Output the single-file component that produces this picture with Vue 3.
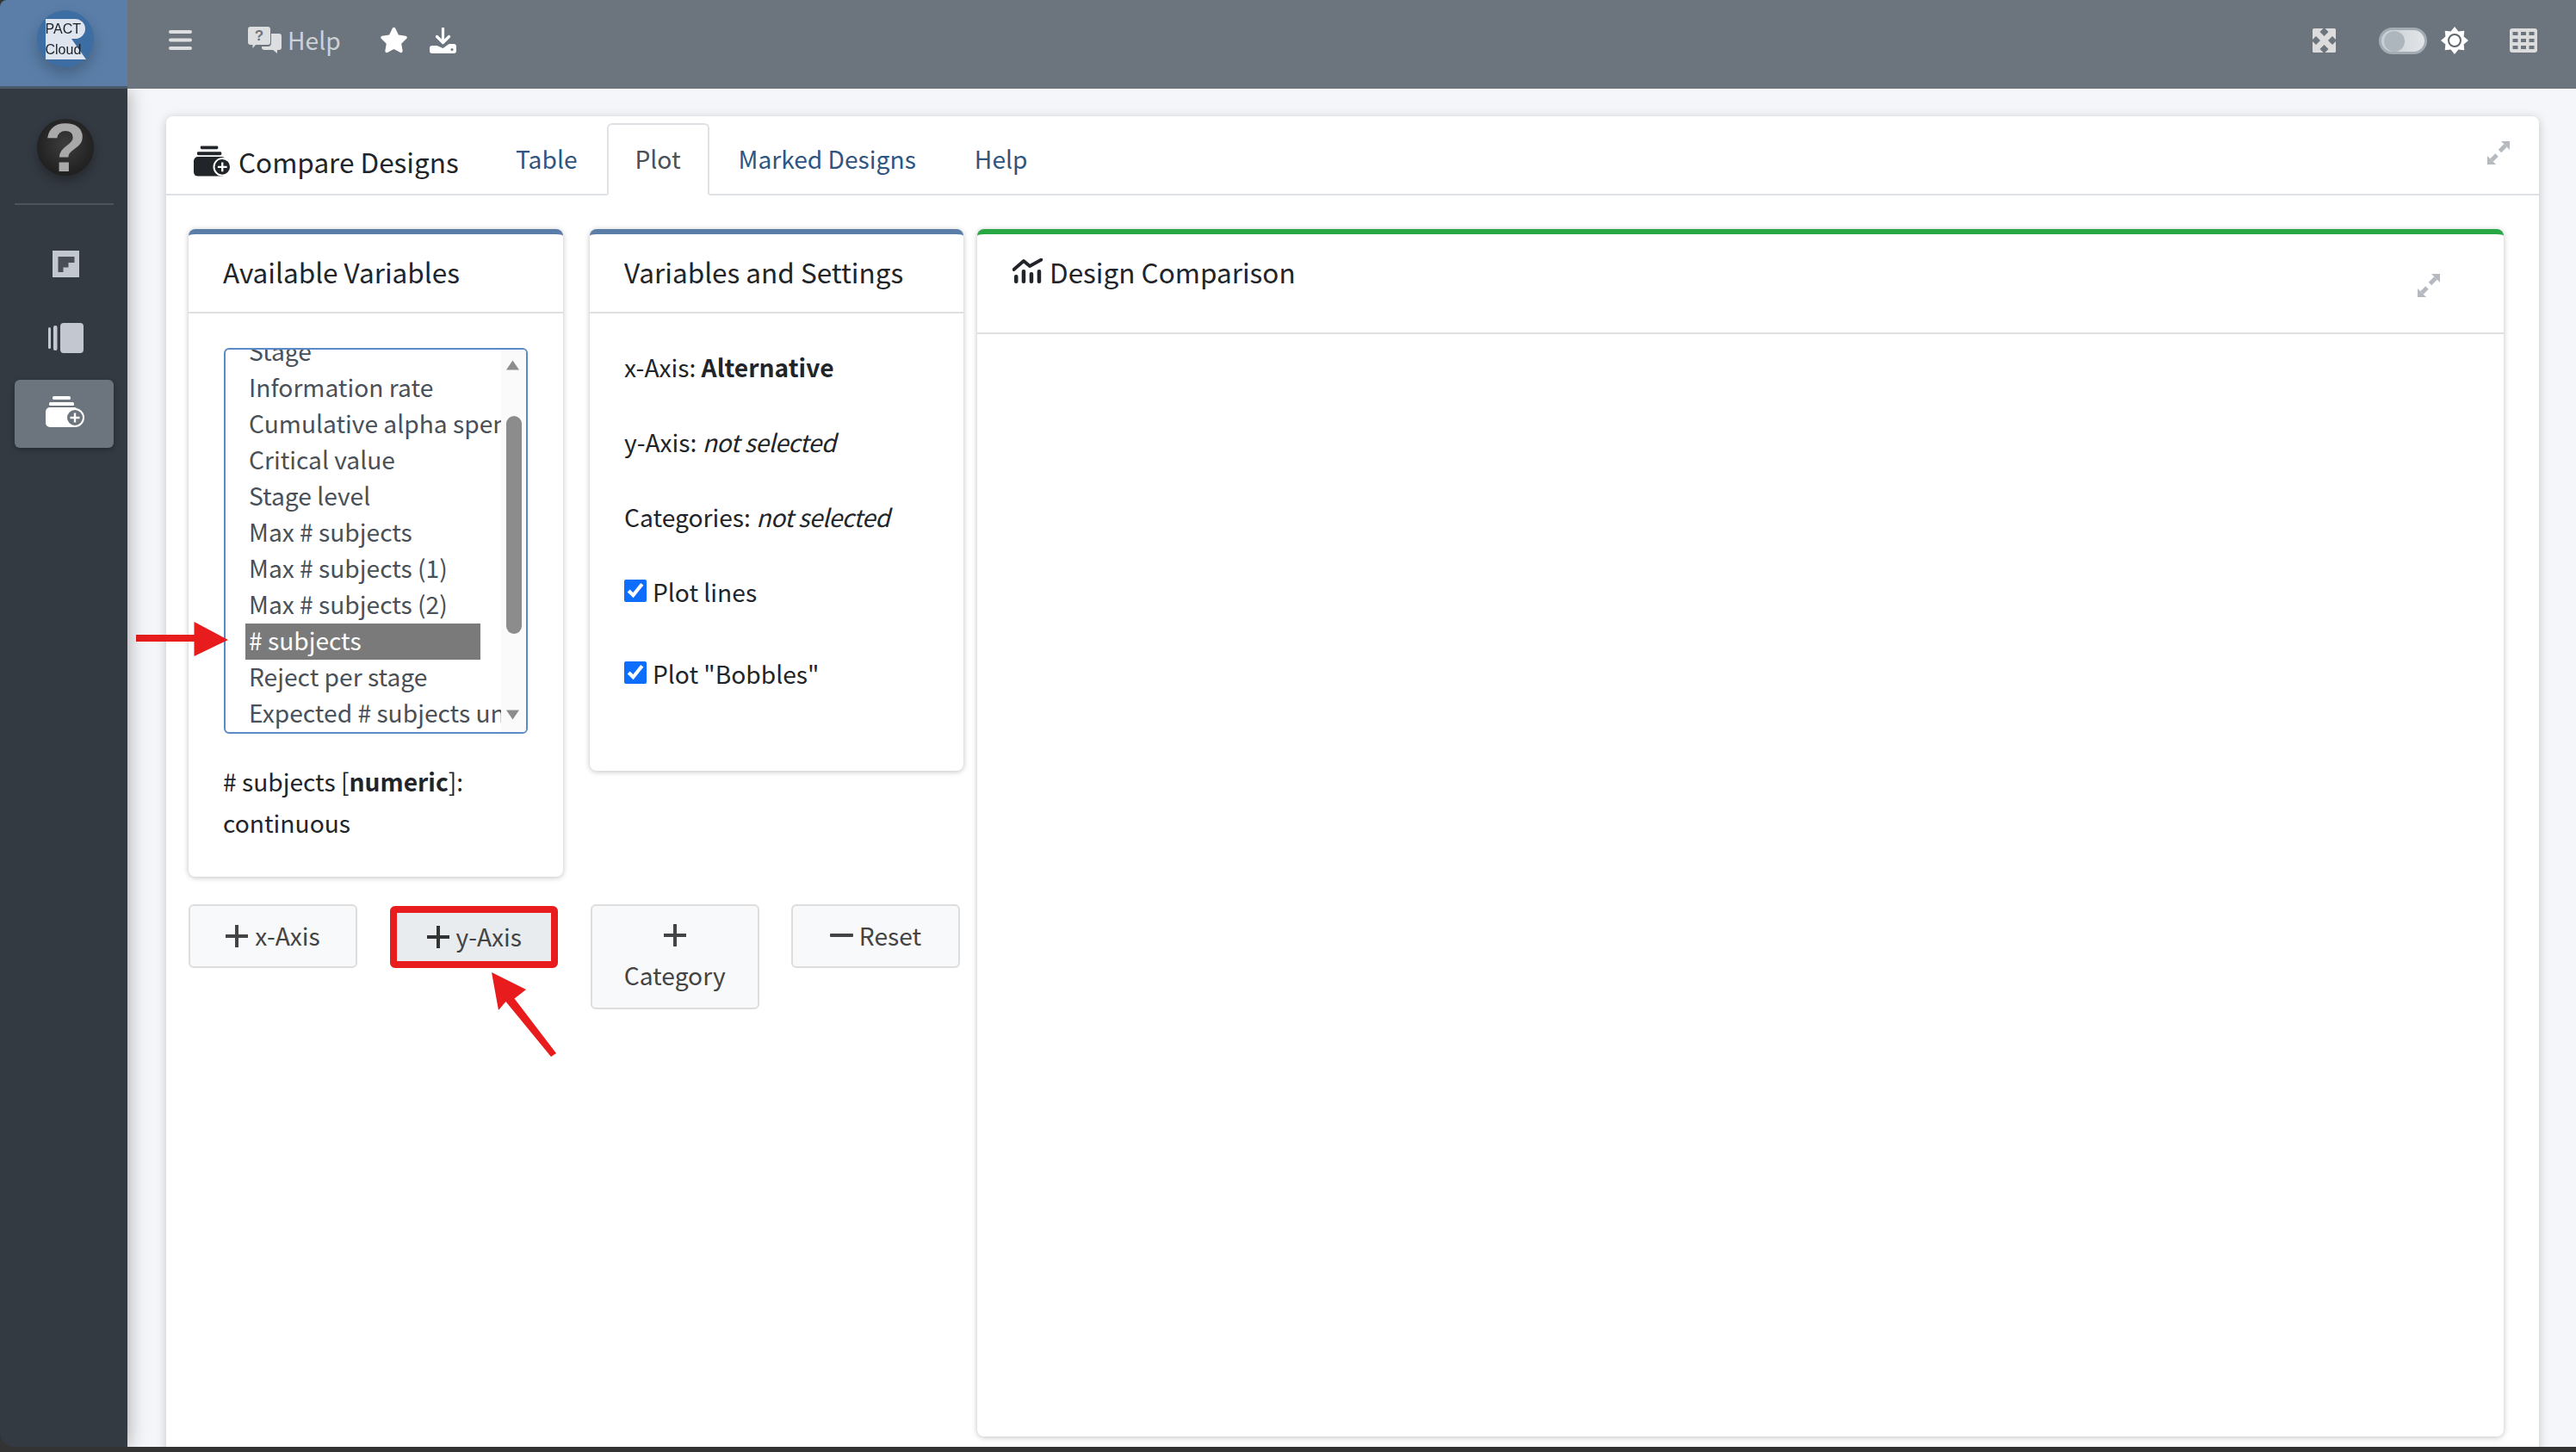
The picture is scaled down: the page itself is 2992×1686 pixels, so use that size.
<script setup>
const variables = [
  'Stage', 'Information rate', 'Cumulative alpha spending', 'Critical value', 'Stage level',
  'Max # subjects', 'Max # subjects (1)', 'Max # subjects (2)', '# subjects', 'Reject per stage',
  'Expected # subjects under H1'
]
const sunPoints = Array.from({ length: 16 }, (_, i) => {
  const r = i % 2 === 0 ? 16 : 11.5
  const a = (i * Math.PI) / 8 - Math.PI / 2
  return `${(16 + r * Math.cos(a)).toFixed(2)},${(16 + r * Math.sin(a)).toFixed(2)}`
}).join(' ')
</script>

<template>
  <div class="screen">
    <div class="frame">
      <div class="brand">
        <svg class="logo" width="148" height="103" viewBox="0 0 148 103">
          <circle cx="76" cy="45" r="33" fill="#3c6ea3" />
          <path d="M53 22H87a12 11.500 0 0 1 0 23H83L100 69H53Z" fill="#dfe5ee" />
          <text x="52.500" y="39" class="logo-text">PACT</text>
          <text x="52.500" y="63" class="logo-text">Cloud</text>
        </svg>
      </div>

      <header class="topbar">
        <svg class="i-bars" viewBox="0 0 27 23" width="27" height="23">
          <rect y="0" width="27" height="4" rx="2" /><rect y="9.500" width="27" height="4" rx="2" /><rect y="19" width="27" height="4" rx="2" />
        </svg>
        <svg class="i-help" viewBox="0 0 39 31" width="39" height="31">
          <path d="M3 0H23a3 3 0 0 1 3 3V18a3 3 0 0 1-3 3H9L5.500 25V21H3a3 3 0 0 1-3-3V3a3 3 0 0 1 3-3Z" fill="#dcdee0" />
          <path d="M26 8H36a3 3 0 0 1 3 3V24a3 3 0 0 1-3 3H34V31L29 27H19a3 3 0 0 1-3-3L16 23H23a4 4 0 0 0 4-4V8Z" fill="#dcdee0" />
          <text x="13" y="16" class="help-q">?</text>
        </svg>
        <span class="help-label">Help</span>
        <svg class="i-star" viewBox="0 0 576 512" width="33" height="31"><path fill="#fff" d="M259.300 17.800L194 150.200 47.900 171.500c-26.200 3.800-36.700 36.100-17.700 54.600l105.700 103-25 145.500c-4.500 26.300 23.200 46 46.400 33.700L288 439.600l130.700 68.700c23.200 12.200 50.900-7.400 46.400-33.700l-25-145.500 105.700-103c19-18.500 8.500-50.800-17.700-54.600L382 150.200 316.700 17.800c-11.700-23.600-45.600-23.900-57.400 0z" /></svg>
        <svg class="i-down" viewBox="0 0 31 30" width="31" height="30">
          <path d="M15.500 1V17M8.500 10.500L15.500 17.500L22.500 10.500" fill="none" stroke="#fff" stroke-width="3.200" stroke-linecap="round" stroke-linejoin="round" />
          <path d="M3 21H8.500L15.500 24L22.500 19H28a3 3 0 0 1 3 3V27a3 3 0 0 1-3 3H3a3 3 0 0 1-3-3V24a3 3 0 0 1 3-3Z" fill="#fff" />
          <circle cx="26" cy="25.500" r="1.500" fill="#6c757d" />
        </svg>
        <div class="top-right">
          <svg class="i-full" viewBox="0 0 27 28" width="27" height="28">
            <rect width="27" height="28" rx="1.500" fill="#dcdcdc" />
            <g fill="#6c757d">
              <path d="M13.500 -1L18.500 4L13.500 9L8.500 4Z" />
              <path d="M13.500 19L18.500 24L13.500 29L8.500 24Z" />
              <path d="M-1 14L4 9L9 14L4 19Z" />
              <path d="M18 14L23 9L28 14L23 19Z" />
            </g>
          </svg>
          <div class="toggle"><span class="knob"></span></div>
          <svg class="i-sun" viewBox="0 0 32 32" width="32" height="32">
            <polygon :points="sunPoints" fill="#fff" />
            <circle cx="16" cy="16" r="7" fill="#fff" stroke="#5f676f" stroke-width="2" />
          </svg>
          <svg class="i-grid" viewBox="0 0 32 28" width="32" height="28">
            <rect width="32" height="28" rx="3" fill="#dcdcdc" />
            <g fill="#6c757d">
              <rect x="3.500" y="4" width="6" height="4" /><rect x="13" y="4" width="6" height="4" /><rect x="22.500" y="4" width="6" height="4" />
              <rect x="3.500" y="12" width="6" height="4" /><rect x="13" y="12" width="6" height="4" /><rect x="22.500" y="12" width="6" height="4" />
              <rect x="3.500" y="20" width="6" height="4" /><rect x="13" y="20" width="6" height="4" /><rect x="22.500" y="20" width="6" height="4" />
            </g>
          </svg>
        </div>
      </header>

      <aside class="sidebar">
        <div class="avatar">
          <svg width="66" height="66" viewBox="0 0 66 66">
            <defs>
              <radialGradient id="board" cx="50%" cy="45%" r="60%">
                <stop offset="0" stop-color="#3d3d3d" /><stop offset="1" stop-color="#1c1c1c" />
              </radialGradient>
            </defs>
            <circle cx="33" cy="33" r="33" fill="url(#board)" />
            <text x="33" y="61" class="avatar-q">?</text>
          </svg>
        </div>
        <div class="side-rule"></div>
        <div class="nav-item">
          <svg width="31" height="31" viewBox="0 0 31 31">
            <rect width="31" height="31" fill="#c2c7d0" />
            <path d="M6.500 7H25.500V14H18.500V19.500H12.500V25H6.500Z" fill="#4a4f57" />
          </svg>
        </div>
        <div class="nav-item">
          <svg width="41" height="35" viewBox="0 0 41 35">
            <rect x="0" y="5" width="3" height="25" rx="1.500" fill="#c2c7d0" />
            <rect x="6" y="3" width="4.500" height="29" rx="2" fill="#c2c7d0" />
            <rect x="14" y="0" width="27" height="35" rx="4" fill="#c2c7d0" />
          </svg>
        </div>
        <div class="nav-item active">
          <svg width="45" height="36" viewBox="0 0 45 36">
            <rect x="8" y="0" width="21" height="4" rx="1.500" fill="#fff" />
            <rect x="4" y="7" width="29" height="4" rx="1.500" fill="#fff" />
            <rect x="0" y="13" width="38" height="23" rx="5" fill="#fff" />
            <circle cx="34" cy="25" r="10" fill="#6c757d" stroke="#fff" stroke-width="2" />
            <path d="M34 19.500V30.500M28.500 25H39.500" stroke="#fff" stroke-width="2.400" />
          </svg>
        </div>
      </aside>

      <main class="content">
        <section class="outer">
          <div class="outer-head">
            <div class="title">
              <svg width="44" height="36" viewBox="0 0 45 36">
                <rect x="8" y="0" width="21" height="4" rx="1.500" fill="#212529" />
                <rect x="4" y="7" width="29" height="4" rx="1.500" fill="#212529" />
                <rect x="0" y="13" width="38" height="23" rx="5" fill="#212529" />
                <circle cx="34" cy="25" r="10" fill="#212529" stroke="#fff" stroke-width="2" />
                <path d="M34 19.500V30.500M28.500 25H39.500" stroke="#fff" stroke-width="2.400" />
              </svg>
              <span>Compare Designs</span>
            </div>
            <nav class="tabs">
              <a class="tab">Table</a>
              <a class="tab current">Plot</a>
              <a class="tab">Marked Designs</a>
              <a class="tab">Help</a>
            </nav>
            <svg class="expand expand-outer" viewBox="0 0 28 29" width="28" height="29">
              <path d="M17 1H27V11Z" fill="#b4bac0" /><path d="M22 6L15.500 12.500" stroke="#b4bac0" stroke-width="5" />
              <path d="M1 18V28H11Z" fill="#b4bac0" /><path d="M6 23L12 17" stroke="#b4bac0" stroke-width="5" />
            </svg>
          </div>

          <div class="outer-body">
            <div class="left-area">
              <div class="panel-row">
                <section class="panel blue vars">
                  <h3 class="panel-head">Available Variables</h3>
                  <div class="panel-body">
                    <div class="listbox">
                      <div class="list">
                        <div v-for="v in variables" :key="v" class="opt" :class="{ sel: v === '# subjects' }">{{ v }}</div>
                      </div>
                      <div class="bar">
                        <svg class="bar-arrow" width="17" height="12" viewBox="0 0 16 12"><path d="M8 0.500L15.500 11.500H0.500Z" fill="#8c8c8c" /></svg>
                        <div class="thumb"></div>
                        <svg class="bar-arrow down" width="17" height="12" viewBox="0 0 16 12"><path d="M8 11.500L15.500 0.500H0.500Z" fill="#8c8c8c" /></svg>
                      </div>
                    </div>
                    <p class="desc"># subjects [<b>numeric</b>]:<br />continuous</p>
                  </div>
                </section>

                <section class="panel blue settings">
                  <h3 class="panel-head">Variables and Settings</h3>
                  <div class="settings-body">
                    <p>x-Axis: <b>Alternative</b></p>
                    <p>y-Axis: <i>not selected</i></p>
                    <p>Categories: <i>not selected</i></p>
                    <label><input type="checkbox" checked /> <span>Plot lines</span></label>
                    <label class="second"><input type="checkbox" checked /> <span>Plot "Bobbles"</span></label>
                  </div>
                </section>
              </div>

              <div class="buttons">
                <button class="btn">
                  <svg class="plus" width="26" height="26" viewBox="0 0 26 26"><path d="M13 0V26M0 13H26" stroke="#444" stroke-width="4" /></svg>
                  x-Axis
                </button>
                <button class="btn hit">
                  <svg class="plus" width="26" height="26" viewBox="0 0 26 26"><path d="M13 0V26M0 13H26" stroke="#333" stroke-width="4" /></svg>
                  y-Axis
                </button>
                <button class="btn tall">
                  <svg class="plus block" width="26" height="26" viewBox="0 0 26 26"><path d="M13 0V26M0 13H26" stroke="#444" stroke-width="4" /></svg>
                  Category
                </button>
                <button class="btn"><span class="minus"></span>Reset</button>
              </div>
            </div>

            <section class="panel green chart">
              <div class="chart-head">
                <svg width="35" height="30" viewBox="0 0 35 30">
                  <path d="M1.500 13L13 3L20 9L33.500 1.500" fill="none" stroke="#212529" stroke-width="3.800" stroke-linecap="round" stroke-linejoin="round" />
                  <g fill="#212529">
                    <rect x="2" y="19" width="4.500" height="10" rx="2" /><rect x="10.700" y="13" width="4.500" height="16" rx="2" />
                    <rect x="19.700" y="16" width="4.500" height="13" rx="2" /><rect x="28.700" y="13" width="4.500" height="16" rx="2" />
                  </g>
                </svg>
                <span>Design Comparison</span>
                <svg class="expand expand-chart" viewBox="0 0 28 29" width="28" height="29">
                  <path d="M17 1H27V11Z" fill="#b4bac0" /><path d="M22 6L15.500 12.500" stroke="#b4bac0" stroke-width="5" />
                  <path d="M1 18V28H11Z" fill="#b4bac0" /><path d="M6 23L12 17" stroke="#b4bac0" stroke-width="5" />
                </svg>
              </div>
            </section>
          </div>
        </section>
      </main>
    </div>

    <svg class="marks" width="2992" height="1686" viewBox="0 0 2992 1686">
      <path d="M158 737H225.500V722L265 743L225.500 762V745H158Z" fill="#e81c1c" />
      <path d="M571 1129L611 1149L597.500 1159.500L646 1223L640 1227L587.500 1163L579 1173Z" fill="#e81c1c" />
    </svg>
  </div>
</template>

<style>
html, body { margin: 0; background: #333; }
</style>

<style scoped>
.screen {
  position: relative;
  width: 2992px;
  height: 1686px;
  overflow: hidden;
  background: #333;
  font-family: "Noto Sans CJK SC", "Noto Sans", sans-serif;
  font-size: 28.200px;
  line-height: 46px;
  color: #212529;
}
.frame {
  height: 1680px;
  display: grid;
  grid-template-columns: 148px 1fr;
  grid-template-rows: 103px 1fr;
  border-radius: 8px 0 0 16px;
  overflow: hidden;
}
.brand { background: #5a7ea8; box-shadow: inset 0 -3px 0 #4b5a6b; z-index: 3; }
.logo { display: block; filter: drop-shadow(0 8px 8px rgba(0, 0, 0, .22)); }
.logo-text { font-family: "Liberation Sans", sans-serif; font-size: 16px; fill: #1a1f25; }

.topbar {
  background: #6c757d;
  display: flex;
  align-items: flex-start;
  position: relative;
  z-index: 2;
}
.i-bars { fill: #dcdee0; margin: 35px 0 0 48px; }
.i-help { margin: 31px 0 0 65px; }
.help-q { font-family: "Liberation Sans", sans-serif; font-weight: 700; font-size: 17px; fill: #6c757d; text-anchor: middle; }
.help-label { color: #cdd1d5; margin: 23px 0 0 7px; }
.i-star { margin: 31px 0 0 45px; }
.i-down { margin: 32px 0 0 25px; }
.top-right { margin-left: auto; display: flex; align-items: flex-start; padding-right: 45px; }
.i-full { margin-top: 33px; }
.toggle {
  box-sizing: border-box;
  width: 56px;
  height: 31px;
  margin: 32px 0 0 50px;
  border: 3px solid #a3abb3;
  border-radius: 16px;
  background: linear-gradient(90deg, #c9ced3, #e2e5e8);
  display: flex;
  align-items: center;
  padding-left: 3px;
}
.knob { width: 24px; height: 24px; border-radius: 50%; background: #adb5bd; }
.i-sun { margin: 31px 0 0 16px; }
.i-grid { margin: 33px 0 0 48px; }

.sidebar {
  background: #343a42;
  display: flex;
  flex-direction: column;
  align-items: center;
  box-shadow: 0 0 22px rgba(0, 0, 0, .35);
  z-index: 1;
}
.avatar { margin: 35px 0 0 4px; height: 66px; filter: drop-shadow(0 6px 6px rgba(0, 0, 0, .3)); }
.avatar svg { display: block; }
.avatar-q { font-family: "Liberation Sans", sans-serif; font-weight: 700; font-size: 80px; fill: #a9a9a9; text-anchor: middle; }
.side-rule { width: 115px; height: 2px; background: #4b545c; margin: 32px 0 0 1px; }
.nav-item { margin-left: 5px; }
.nav-item svg { display: block; }
.nav-item:nth-of-type(3) { margin-top: 53px; }
.nav-item:nth-of-type(4) { margin-top: 53px; }
.nav-item.active {
  box-sizing: border-box;
  width: 115px;
  height: 79px;
  margin: 31px 0 0 1px;
  padding: 19px 0 0 36px;
  background: #6c757d;
  border-radius: 6px;
  box-shadow: 0 2px 6px rgba(0, 0, 0, .3);
}

.content {
  background: #f4f6f9;
  border-top: 1px solid #fff;
  padding: 31px 43px 0 45px;
  min-height: 0;
}
.outer {
  height: 1600px;
  background: #fff;
  border-radius: 8px 8px 0 0;
  box-shadow: 0 2px 12px rgba(0, 0, 0, .2);
  position: relative;
}
.outer-head {
  box-sizing: border-box;
  height: 92px;
  border-bottom: 2px solid #dee2e6;
  display: flex;
  align-items: flex-end;
  padding-left: 32px;
  position: relative;
}
.title { width: 340px; display: flex; align-items: flex-start; align-self: flex-start; padding-top: 29px; font-size: 31.500px; }
.title svg { margin-top: 5px; }
.title span { margin-left: 8px; line-height: 46px; }
.tabs { display: flex; height: 84px; margin-bottom: -2px; }
.tab {
  box-sizing: border-box;
  padding: 13px 34px 0;
  color: #2f5581;
  line-height: 56px;
}
.tab.current {
  width: 119px;
  padding: 11px 0 0;
  text-align: center;
  color: #495057;
  background: #fff;
  border: 2px solid #dee2e6;
  border-bottom-color: #fff;
  border-radius: 6px 6px 0 0;
}
.expand-outer { position: absolute; left: 2695px; top: 28px; }

.outer-body { display: flex; gap: 16px; padding: 39px 41px 0 26px; }
.left-area { width: 900px; flex: none; }
.panel-row { display: flex; gap: 31px; align-items: flex-start; }
.panel { background: #fff; border-radius: 8px; box-shadow: 0 1px 6px rgba(0, 0, 0, .25); box-sizing: border-box; }
.blue { border-top: 6px solid #5a7ea8; }
.green { border-top: 6px solid #28a745; }
.vars { width: 435px; height: 752px; }
.settings { width: 434px; height: 629px; }
.panel-head {
  box-sizing: border-box;
  height: 92px;
  margin: 0;
  padding: 20px 0 0 40px;
  font-weight: 400;
  font-size: 31.500px;
  line-height: 46px;
  border-bottom: 2px solid #e0e0e0;
}
.panel-body { padding: 40px 0 0 41px; }
.listbox {
  box-sizing: border-box;
  width: 353px;
  height: 448px;
  border: 2px solid #5b8bc7;
  border-radius: 6px;
  display: flex;
  overflow: hidden;
}
.list { width: 320px; overflow: hidden; color: #495057; white-space: nowrap; }
.opt { height: 42px; line-height: 38px; width: 273px; margin-left: 23px; padding-left: 4px; box-sizing: border-box; }
.opt:first-child { margin-top: -18px; }
.opt.sel { background: #7a7a7a; color: #fff; }
.bar { width: 29px; background: #fafafa; display: flex; flex-direction: column; align-items: center; }
.bar-arrow { margin: 12px 2px 0 0; flex: none; }
.thumb { width: 18px; height: 253px; border-radius: 9px; background: #8c8c8c; margin-top: 53px; flex: none; }
.bar-arrow.down { margin-top: 88px; }
.desc { margin: 31px 0 0 -1px; line-height: 47.500px; }

.settings-body { padding: 39px 0 0 40px; }
.settings-body p { margin: 0 0 41px; line-height: 46px; }
.settings-body i { letter-spacing: -.45px; }
.settings-body label { display: flex; align-items: center; line-height: 46px; margin-bottom: 49px; }
.settings-body input { width: 26px; height: 26px; margin: 0 7px 0 0; accent-color: #0d6efd; flex: none; position: relative; top: -1px; }

.buttons { display: grid; grid-template-columns: repeat(4, 196px); gap: 37.330px; margin-top: 32px; align-items: flex-start; }
.btn {
  box-sizing: border-box;
  height: 74px;
  padding: 0 0 3px;
  font: inherit;
  line-height: 48px;
  color: #444;
  background: #f8f9fa;
  border: 2px solid #ddd;
  border-radius: 6px;
  display: flex;
  align-items: center;
  justify-content: center;
}
.btn.hit { background: #e9ecef; outline: 8px solid #e81c1c; outline-offset: -8px; height: 72px; margin: 2px 0 0 1px; }
.btn.tall { height: 122px; flex-direction: column; justify-content: flex-start; padding-top: 21px; }
.plus { margin-right: 8px; flex: none; position: relative; top: 1px; }
.plus.block { margin: 0 0 9px; top: 0; }
.minus { width: 27px; height: 4px; background: #444; margin-right: 7px; border-radius: 1px; }

.chart { width: 1773px; height: 1402px; border-radius: 8px; }
.chart-head {
  box-sizing: border-box;
  height: 116px;
  border-bottom: 2px solid #e0e0e0;
  padding: 20px 0 0 41px;
  display: flex;
  align-items: flex-start;
  font-size: 31.500px;
  position: relative;
}
.chart-head svg:first-child { margin: 8px 8px 0 0; }
.expand-chart { position: absolute; left: 1672px; top: 45px; }

.marks { position: absolute; left: 0; top: 0; pointer-events: none; }
</style>
